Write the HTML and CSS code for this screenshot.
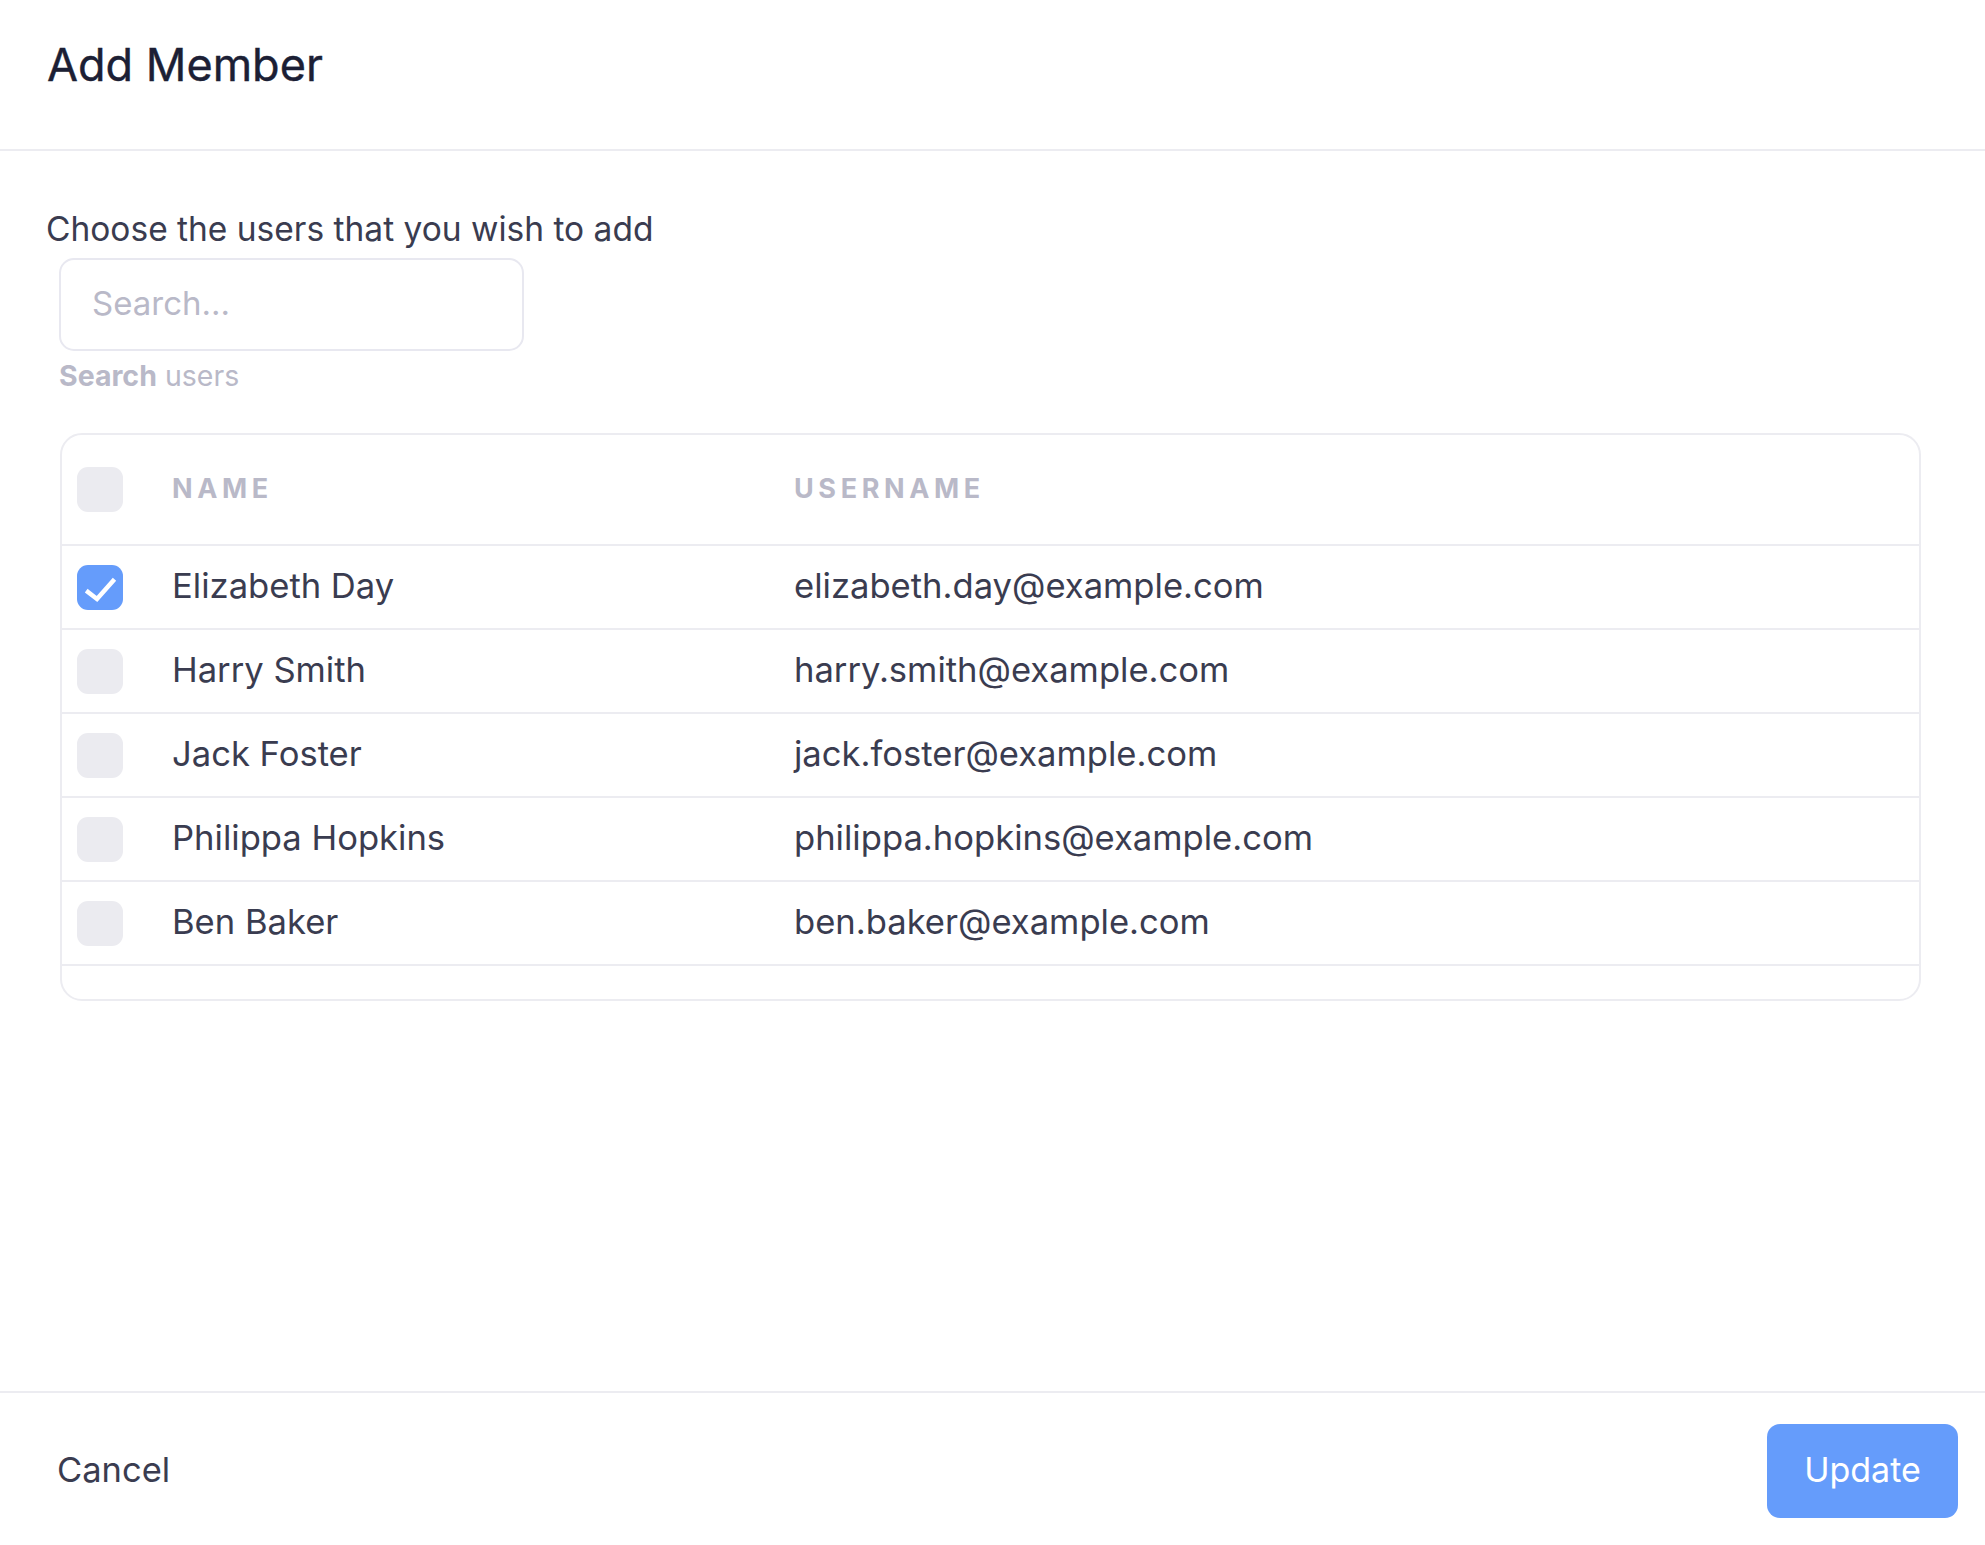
FILE: index.html
```html
<!DOCTYPE html>
<html lang="en">
<head>
<meta charset="utf-8">
<title>Add Member</title>
<link rel="stylesheet" href="styles.css">
</head>
<body>
<div class="modal">
  <header class="modal-header">
    <h1 class="title">Add Member</h1>
  </header>
  <main class="modal-body">
    <p class="intro">Choose the users that you wish to add</p>
    <div class="field">
      <input class="search" type="text" placeholder="Search...">
      <div class="help"><strong>Search</strong> users</div>
    </div>
    <div class="table">
      <div class="row head">
        <div class="cell check"><span class="box"></span></div>
        <div class="cell th">NAME</div>
        <div class="cell th">USERNAME</div>
      </div>
      <div class="row">
        <div class="cell check"><span class="box checked"><svg viewBox="0 0 46 46" width="46" height="46"><path d="M11 27 L20 34 L36 16" fill="none" stroke="#fff" stroke-width="4.5" stroke-linecap="square" stroke-linejoin="miter"/></svg></span></div>
        <div class="cell td">Elizabeth Day</div>
        <div class="cell td">elizabeth.day@example.com</div>
      </div>
      <div class="row">
        <div class="cell check"><span class="box"></span></div>
        <div class="cell td">Harry Smith</div>
        <div class="cell td">harry.smith@example.com</div>
      </div>
      <div class="row">
        <div class="cell check"><span class="box"></span></div>
        <div class="cell td">Jack Foster</div>
        <div class="cell td">jack.foster@example.com</div>
      </div>
      <div class="row">
        <div class="cell check"><span class="box"></span></div>
        <div class="cell td">Philippa Hopkins</div>
        <div class="cell td">philippa.hopkins@example.com</div>
      </div>
      <div class="row">
        <div class="cell check"><span class="box"></span></div>
        <div class="cell td">Ben Baker</div>
        <div class="cell td">ben.baker@example.com</div>
      </div>
      <div class="table-foot"></div>
    </div>
  </main>
  <footer class="modal-footer">
    <button class="btn-cancel" type="button">Cancel</button>
    <button class="btn-update" type="button">Update</button>
  </footer>
</div>
</body>
</html>
```

FILE: styles.css
```css
* { box-sizing: border-box; }
html, body { margin: 0; padding: 0; background: #fff; }
body {
  font-family: Inter, "Noto Sans", "Liberation Sans", sans-serif;
  color: #3a3c50;
}
.modal {
  display: flex;
  flex-direction: column;
  height: 100vh;
}
.modal-header {
  padding: 38px 47px 57px;
  border-bottom: 2px solid #ececf1;
}
.title {
  margin: 0;
  font-size: 45px;
  line-height: 54px;
  font-weight: 400;
  color: #1c1f35;
  -webkit-text-stroke: 0.4px #1c1f35;
}
.modal-body {
  flex: 1;
  padding: 58px 64px 0 46px;
}
.intro {
  margin: 0;
  font-size: 33.5px;
  line-height: 40px;
  color: #3a3c50;
}
.field {
  margin: 9px 0 0 13px;
}
.search {
  display: block;
  width: 465px;
  height: 93px;
  border: 2px solid #e8e8f0;
  border-radius: 15px;
  padding: 0 0 4px 31px;
  font-family: inherit;
  font-size: 33px;
  color: #3a3c50;
  outline: none;
  background: #fff;
}
.search::placeholder { color: #b9b9c8; }
.help {
  margin-top: 8px;
  font-size: 28.5px;
  line-height: 34px;
  color: #b9b9c8;
}
.help strong { font-weight: 700; }
.table {
  margin: 40px 0 0 14px;
  border: 2px solid #ececf1;
  border-radius: 22px;
}
.row {
  display: grid;
  grid-template-columns: 110px 622px 1fr;
  align-items: center;
  height: 84px;
  border-bottom: 2px solid #ececf1;
}
.row.head { height: 111px; }
.cell.check { padding-left: 15px; display: flex; align-items: center; }
.box {
  display: block;
  width: 46px;
  height: 45px;
  border-radius: 11px;
  background: #ebebf0;
}
.box.checked { background: #659cfb; }
.box svg { display: block; }
.th {
  font-size: 27px;
  font-weight: 700;
  letter-spacing: 4.6px;
  color: #b9b9c8;
  padding-bottom: 3px;
}
.td {
  font-size: 34.6px;
  color: #3a3c50;
  padding-bottom: 4px;
}
.table-foot { height: 33px; }
.modal-footer {
  display: flex;
  justify-content: space-between;
  align-items: center;
  height: 154px;
  border-top: 2px solid #ececf1;
  padding: 0 27px 0 57px;
}
.btn-cancel {
  border: 0;
  background: none;
  padding: 0;
  font-family: inherit;
  font-size: 34.5px;
  color: #3a3c50;
}
.btn-update {
  width: 191px;
  height: 94px;
  border: 0;
  border-radius: 13px;
  background: #659cfb;
  color: #fff;
  font-family: inherit;
  font-size: 34px;
  padding: 0 0 4px;
  margin-top: 4px;
}
```
